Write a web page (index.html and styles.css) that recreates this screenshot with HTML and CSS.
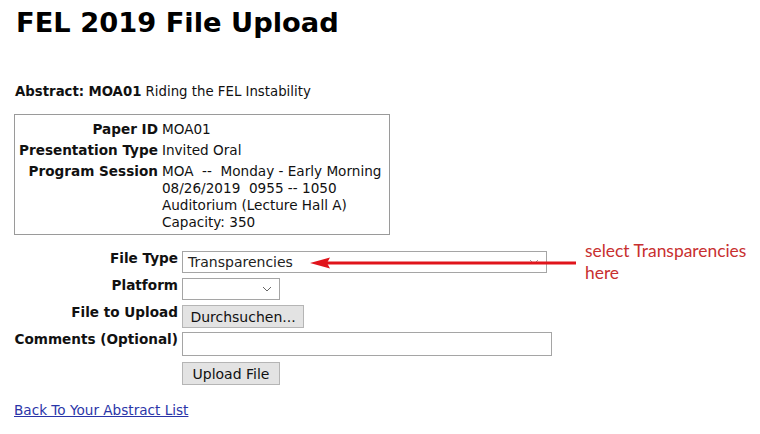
FILE: index.html
```html
<!DOCTYPE html>
<html lang="en">
<head>
    <meta charset="UTF-8">
    <title>FEL 2019 File Upload</title>
    <link rel="stylesheet" href="styles.css">
</head>
<body>

    <h1>FEL 2019 File Upload</h1>

    <p class="abstract"><b>Abstract:</b> <b>MOA01</b> Riding the FEL Instability</p>

    <table class="info">
        <tr>
            <th>Paper ID</th>
            <td>MOA01</td>
        </tr>
        <tr>
            <th>Presentation Type</th>
            <td>Invited Oral</td>
        </tr>
        <tr>
            <th>Program Session</th>
            <td>MOA &nbsp;-- &nbsp;Monday - Early Morning<br>08/26/2019 &nbsp;0955 -- 1050<br>Auditorium (Lecture Hall A)<br>Capacity: 350</td>
        </tr>
    </table>

    <div class="upload">
        <table class="form">
            <tr>
                <th>File Type</th>
                <td><div class="select wide"><span>Transparencies</span>
                    <svg class="chev" width="10" height="6" viewBox="0 0 10 6"><path d="M1 1 L5 5 L9 1" fill="none" stroke="#999" stroke-width="1"/></svg>
                </div></td>
            </tr>
            <tr>
                <th>Platform</th>
                <td><div class="select small"><span></span>
                    <svg class="chev" width="10" height="6" viewBox="0 0 10 6"><path d="M1 1 L5 5 L9 1" fill="none" stroke="#666" stroke-width="1"/></svg>
                </div></td>
            </tr>
            <tr>
                <th>File to Upload</th>
                <td><button class="btn browse">Durchsuchen...</button></td>
            </tr>
            <tr>
                <th>Comments (Optional)</th>
                <td><input type="text" class="comments"></td>
            </tr>
            <tr>
                <th></th>
                <td><button class="btn submit">Upload File</button></td>
            </tr>
        </table>

        <div class="note">
            <svg class="arrow" width="270" height="14" viewBox="0 0 270 14">
                <line x1="14" y1="7" x2="266" y2="7" stroke="#e0141b" stroke-width="3"/>
                <polygon points="0,7 20,1.5 17,7 20,12.5" fill="#e0141b"/>
            </svg>
            <p class="note-text">select Transparencies<br>here</p>
        </div>
    </div>

    <p class="back"><a href="#">Back To Your Abstract List</a></p>

</body>
</html>
```

FILE: styles.css
```css
body {
    margin: 0;
    padding: 0 14px;
    font-family: "DejaVu Sans", Verdana, sans-serif;
    font-size: 13.6px;
    color: #111;
    background: white;
}
h1 {
    font-size: 27.3px;
    margin: 7px 0 0 2px;
    height: 32px;
    line-height: 32px;
    color: #000;
}
.abstract {
    font-size: 13.3px;
    margin: 44px 0 0 1px;
    line-height: 18px;
}
.info {
    margin-top: 13px;
    border: 1px solid #9a9a9a;
    border-spacing: 2px;
    padding: 3px 3px 0 1px;
    width: 376px;
}
.info th {
    text-align: right;
    vertical-align: top;
    white-space: nowrap;
    padding: 1px 2px 1px 1px;
    line-height: 17px;
}
.info td {
    vertical-align: top;
    padding: 1px 0;
    line-height: 17px;
    white-space: nowrap;
    width: 100%;
}
.upload {
    position: relative;
    margin-top: 16px;
}
.form {
    border-spacing: 0;
}
.form th {
    text-align: right;
    vertical-align: top;
    white-space: nowrap;
    padding: 0 3px 0 0;
    line-height: 14px;
    width: 164px;
    height: 27px;
}
.form td {
    vertical-align: top;
    padding: 0 0 0 1px;
}
.select {
    display: flex;
    justify-content: space-between;
    align-items: center;
    height: 22px;
    box-sizing: border-box;
    border: 1px solid #a5a5a5;
    background: white;
    font-family: Tahoma, "DejaVu Sans", sans-serif;
    font-size: 14px;
    padding: 0 7px 0 5px;
    color: #222;
}
.select.wide {
    width: 365px;
}
.select.small {
    width: 98px;
}
.btn {
    height: 23px;
    padding: 0;
    border: 1px solid #b5b5b5;
    background: #e3e3e3;
    font-family: Tahoma, "DejaVu Sans", sans-serif;
    font-size: 14px;
    color: #111;
    white-space: nowrap;
}
.browse {
    width: 122px;
}
.submit {
    width: 98px;
    margin-top: 3px;
}
.comments {
    width: 370px;
    height: 24px;
    box-sizing: border-box;
    border: 1px solid #a5a5a5;
    margin: 0;
}
.note {
    position: absolute;
    left: 296px;
    top: -11px;
    display: flex;
    align-items: flex-start;
    gap: 5px;
}
.arrow {
    margin-top: 16px;
}
.note-text {
    margin: 0;
    font-family: Lato, "Open Sans", sans-serif;
    font-size: 17.4px;
    line-height: 22px;
    color: #c83030;
    white-space: nowrap;
}
.back {
    margin: 16px 0 0 0;
}
.back a {
    color: #2a35a8;
}
```
